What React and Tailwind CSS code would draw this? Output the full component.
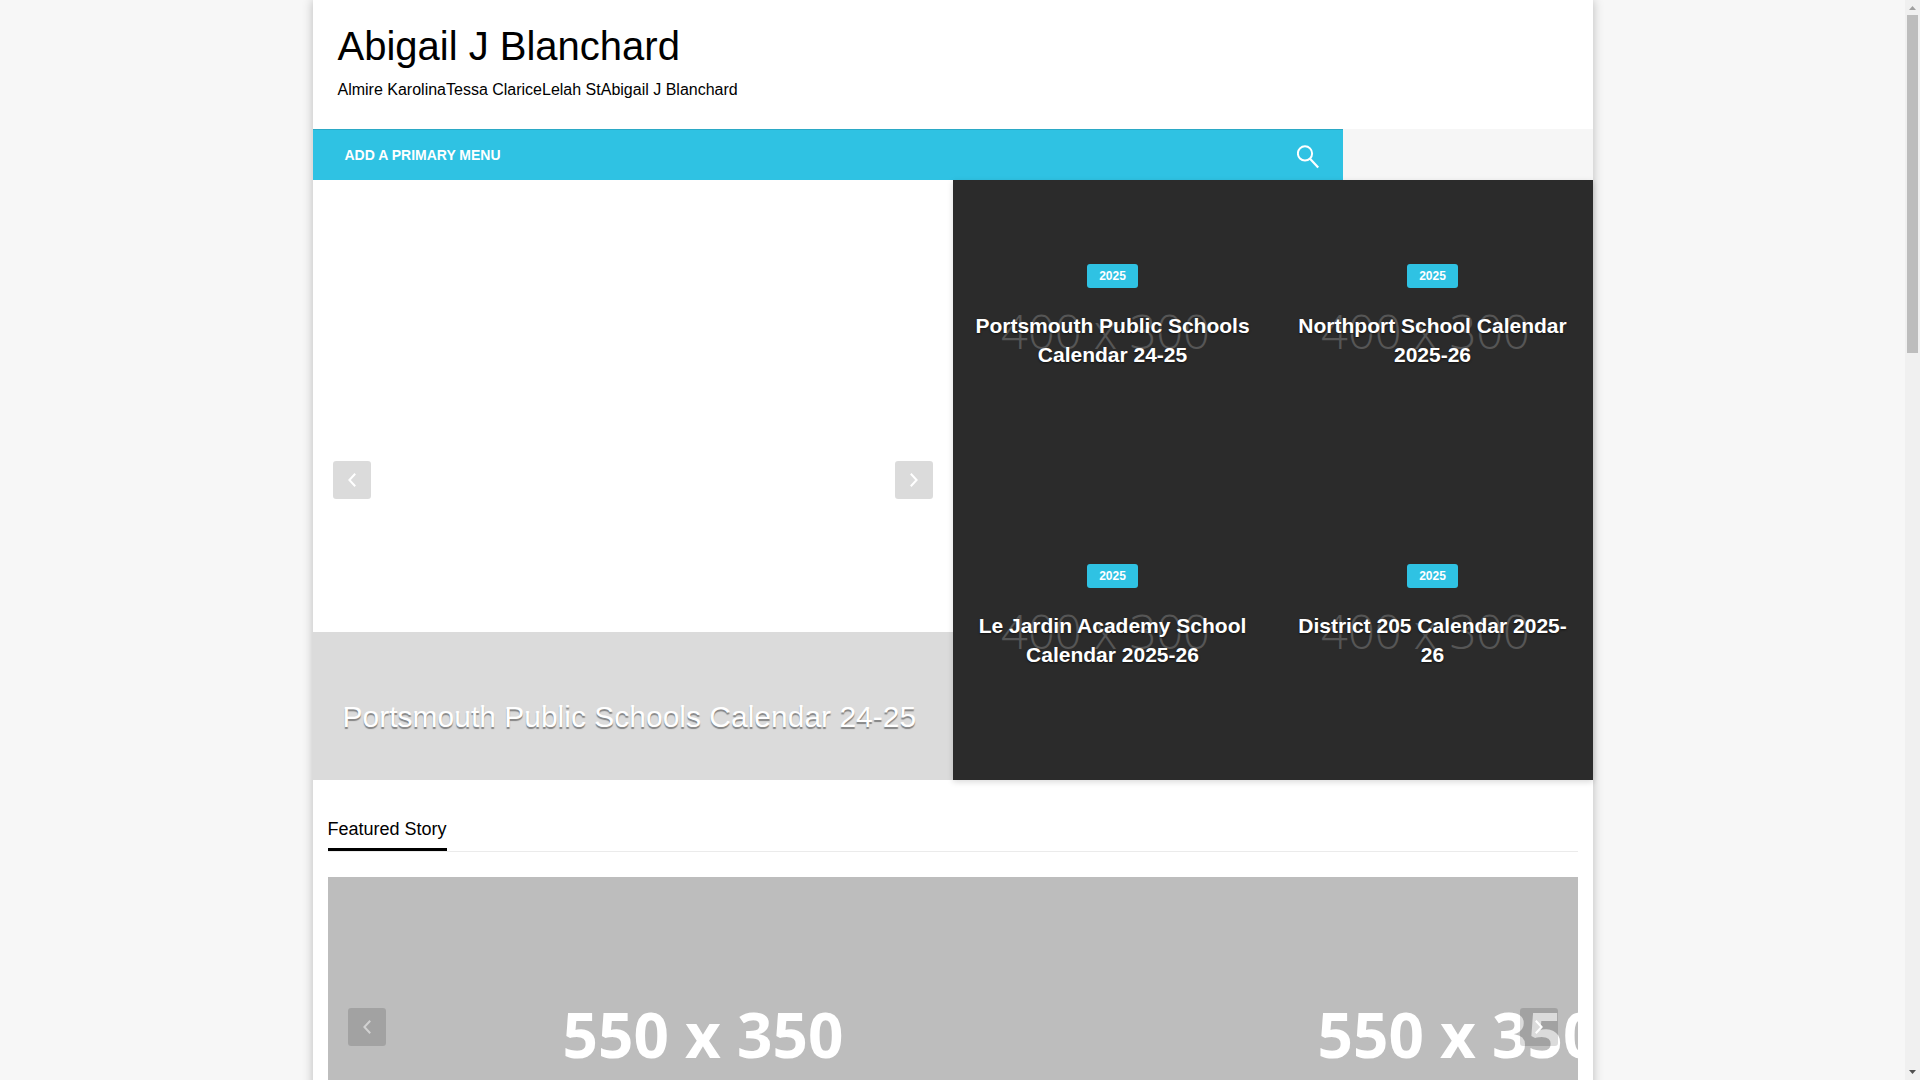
import React from 'react';

const posts = [
  { id: 1, tag: '2025', title: 'Portsmouth Public Schools Calendar 24-25' },
  { id: 2, tag: '2025', title: 'Northport School Calendar 2025-26' },
  { id: 3, tag: '2025', title: 'Le Jardin Academy School Calendar 2025-26' },
  { id: 4, tag: '2025', title: 'District 205 Calendar 2025-26' },
];

const slides = [1, 2];

const Chevron = ({ direction }) => (
  <svg width="8" height="14" viewBox="0 0 8 14" fill="none" stroke="currentColor" strokeWidth="2" aria-hidden="true">
    {direction === 'left' ? <path d="M7.2 .8 1.4 7 7.2 13.2" /> : <path d="M.8 .8 6.6 7 .8 13.2" />}
  </svg>
);

const SliderArrows = ({ leftClass = 'text-white' }) => (
  <div className="absolute inset-0 flex items-center justify-between px-5">
    <button aria-label="Previous" className={`flex size-[38px] items-center justify-center rounded-[3px] bg-black/14 ${leftClass}`}>
      <Chevron direction="left" />
    </button>
    <button aria-label="Next" className="flex size-[38px] items-center justify-center rounded-[3px] bg-black/14 text-white">
      <Chevron direction="right" />
    </button>
  </div>
);

const Header = () => (
  <header className="px-[25px] pt-5 pb-[25px]">
    <h1 className="text-[40px] leading-[52px]"><a href="#">Abigail J Blanchard</a></h1>
    <p className="mt-1 text-base leading-7">Almire KarolinaTessa ClariceLelah StAbigail J Blanchard</p>
  </header>
);

const Navigation = () => (
  <div className="bg-[#f6f6f6]">
    <nav className="flex h-[51px] w-full max-w-[1030px] items-center justify-between border-t border-[#2ba9c6] bg-[#2fc2e3] pr-6 pl-8 text-white">
      <a href="#" className="text-sm font-bold uppercase">Add a primary menu</a>
      <button aria-label="Search" className="pt-1">
        <svg width="22" height="24" viewBox="0 0 22 24" fill="none" stroke="currentColor" aria-hidden="true">
          <circle cx="8" cy="8.4" r="7.1" strokeWidth="2" />
          <path d="m12.8 13.6 8.4 9" strokeWidth="2.2" />
        </svg>
      </button>
    </nav>
  </div>
);

const PostCard = ({ post }) => (
  <article className="relative flex h-[300px] flex-col items-center overflow-hidden px-5 pt-21 text-center text-white">
    {/* thumbnail placeholder under the dark overlay */}
    <span className="absolute inset-0 flex items-center justify-center pt-0.5 pr-3.5 font-['Open_Sans'] text-[47px] font-light text-[#565656]">
      400 x 300
    </span>
    <a href="#" className="relative rounded-[3px] bg-[#2fc2e3] px-3 text-xs leading-6 font-bold">{post.tag}</a>
    <h3 className="relative mt-[23px] text-[21px] leading-[29px] font-bold text-shadow-[0_1px_2px_rgba(0,0,0,0.6)]">
      <a href="#">{post.title}</a>
    </h3>
  </article>
);

const Hero = () => (
  <section className="grid grid-cols-2">
    <div className="relative flex flex-col justify-end bg-white">
      <div className="bg-[#dbdbdb] px-[30px] pt-[65px] pb-[43px]">
        <h2 className="text-3xl leading-10 text-white text-shadow-[0_2px_1px_rgba(0,0,0,0.4)]">
          <a href="#">Portsmouth Public Schools Calendar 24-25</a>
        </h2>
      </div>
      <SliderArrows />
    </div>
    <div className="relative grid grid-cols-2 bg-[#2b2b2b] shadow-[0_2px_6px_rgba(0,0,0,0.15)]">
      {posts.map((post) => (
        <PostCard key={post.id} post={post} />
      ))}
    </div>
  </section>
);

const FeaturedStory = () => (
  <section className="px-[15px] pt-[35px]">
    <div className="flex border-b border-[#ebebeb]">
      <h2 className="border-b-[3px] border-black pb-1 text-lg leading-[29px]">Featured Story</h2>
    </div>
    <div className="relative mt-[25px] h-[300px] overflow-hidden bg-[#bdbdbd]">
      <div className="flex">
        {slides.map((slide) => (
          <div
            key={slide}
            className="w-[755px] shrink-0 pt-[117px] pr-1 text-center font-['Open_Sans'] text-[62px] leading-20 font-bold text-white"
          >
            550 x 350
          </div>
        ))}
      </div>
      <SliderArrows leftClass="text-white/50" />
    </div>
  </section>
);

const Scrollbar = () => (
  <div className="flex w-[15px] shrink-0 flex-col items-center justify-between bg-[#f0f0f0] pt-[6px] pb-[6px]">
    <div className="flex flex-col items-center gap-[5px]">
      <svg width="7" height="4" viewBox="0 0 7 4" fill="#a0a0a0" aria-hidden="true"><path d="M0 4 3.5 0 7 4z" /></svg>
      <div className="h-[338px] w-[11px] bg-[#bdbdbd]" />
    </div>
    <svg width="7" height="4" viewBox="0 0 7 4" fill="#505050" aria-hidden="true"><path d="M0 0 3.5 4 7 0z" /></svg>
  </div>
);

const App = () => {
  return (
    <div className="flex h-screen bg-[#f7f7f7] font-['Liberation_Sans',sans-serif] text-black">
      <div className="flex-1 overflow-hidden">
        <div className="mx-auto min-h-screen max-w-[1280px] bg-white shadow-[0_0_10px_rgba(0,0,0,0.25)]">
          <Header />
          <Navigation />
          <Hero />
          <FeaturedStory />
        </div>
      </div>
      <Scrollbar />
    </div>
  );
};

export default App;
